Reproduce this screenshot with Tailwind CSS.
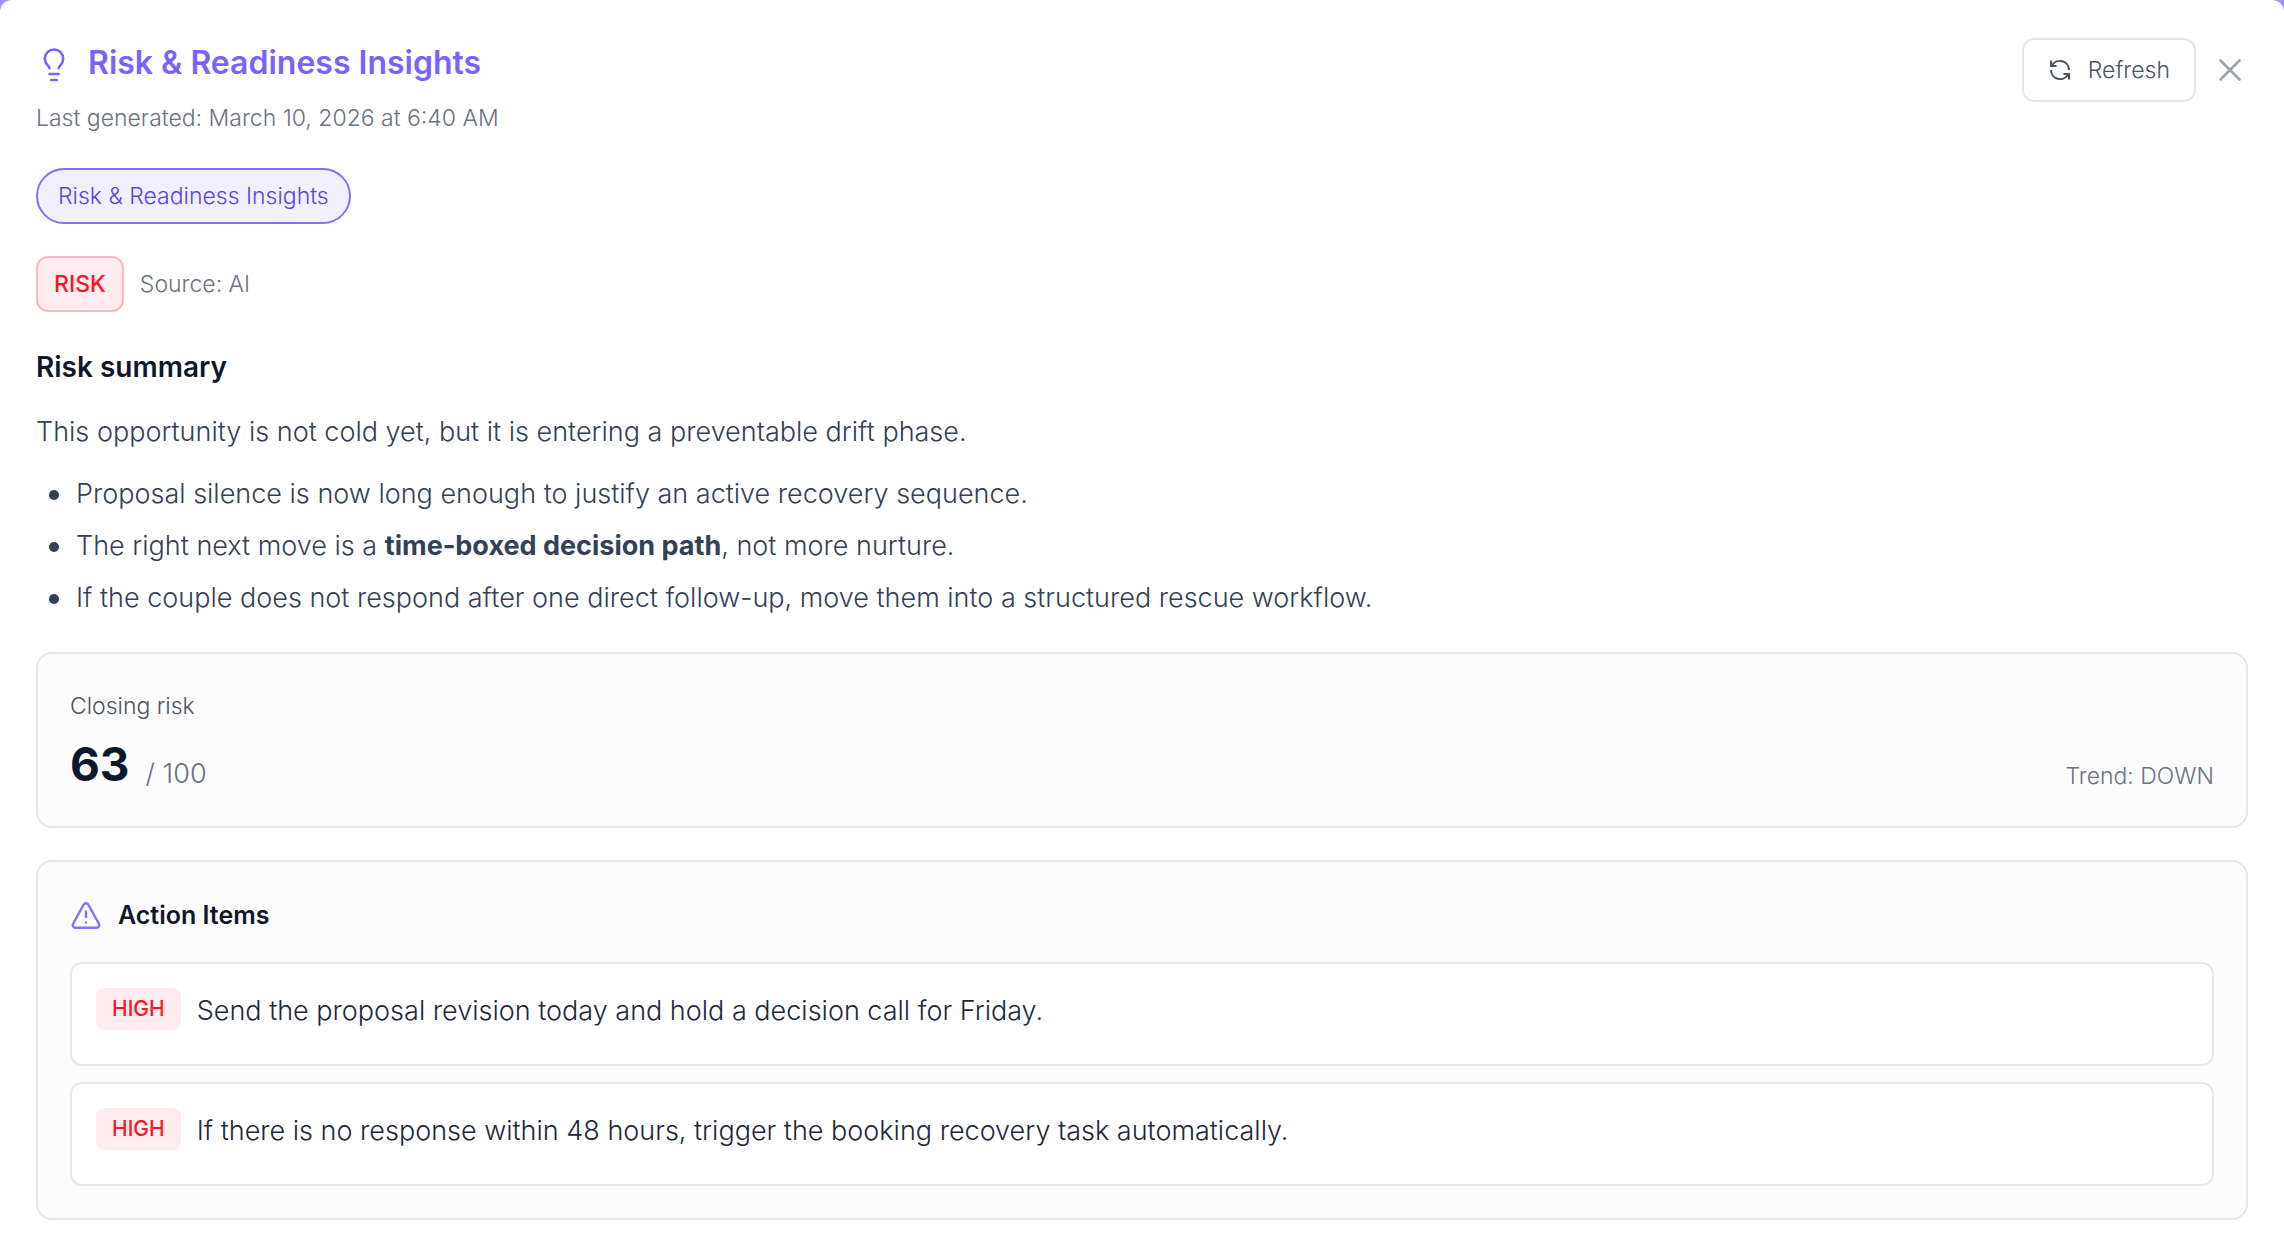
<!DOCTYPE html>
<html lang="en">
<head>
<meta charset="utf-8">
<meta name="viewport" content="width=device-width, initial-scale=1">
<title>Risk &amp; Readiness Insights</title>
<script src="https://cdn.jsdelivr.net/npm/@tailwindcss/browser@4"></script>
</head>
<body class="min-h-screen bg-[#a48ff8] font-['Inter',sans-serif] font-light">
<main class="flex min-h-screen flex-col gap-8 rounded-t-xl bg-white px-9 pt-[38px] pb-[30px]">
  <header class="flex items-start justify-between">
    <div class="flex flex-col gap-3">
      <h1 class="flex h-[50px] items-center gap-4 text-[32px] font-semibold text-[#7b61ff]">
        <svg class="size-9 overflow-visible" viewBox="0 0 24 24" fill="none" stroke="currentColor" stroke-width="1.7" stroke-linecap="round" stroke-linejoin="round" aria-hidden="true"><path d="M9 15.5C8.600 13.800 5.900 12.600 5.900 9.100a6.100 6.100 0 0 1 12.200 0C18.100 12.600 15.500 13.800 15.100 15.500M9 19.300h6M10.200 23.300h3.600"/></svg>
        Risk &amp; Readiness Insights
      </h1>
      <p class="text-[23px] leading-9 text-[#6b7280]">Last generated: March 10, 2026 at 6:40 AM</p>
    </div>
    <div class="flex items-center gap-4">
      <button type="button" class="flex h-16 items-center gap-4 rounded-xl border-2 border-[#e5e7eb] px-6 text-[23px] text-[#4b5563]">
        <svg class="size-6" viewBox="0 0 24 24" fill="none" stroke="currentColor" stroke-width="2" aria-hidden="true"><path d="M3 2.500V8h5.500M4 7.800A9 9 0 0 1 21 12M21 21.500V16h-5.500M20 16.200A9 9 0 0 1 3 12"/></svg>
        Refresh
      </button>
      <button type="button" aria-label="Close" class="text-[#9ca3af]">
        <svg class="size-9" viewBox="0 0 36 36" fill="none" stroke="currentColor" stroke-width="2.700" stroke-linecap="round" aria-hidden="true"><path d="M8.500 8.500l19 19M27.500 8.500l-19 19"/></svg>
      </button>
    </div>
  </header>

  <nav class="flex">
    <a href="#risk" class="flex h-14 items-center rounded-full border-2 border-[#8670fa] bg-[#f2f0ff] px-5 text-[23px] text-[#5b43e6]">Risk &amp; Readiness Insights</a>
  </nav>

  <div class="flex items-center gap-4 text-[23px]">
    <span class="flex h-14 items-center rounded-xl border-2 border-[#ffb8bb] bg-[#ffecee] px-4 font-medium text-[#fb1528]">RISK</span>
    <span class="text-[#6b7280]">Source: AI</span>
  </div>

  <section id="risk" class="flex flex-col text-[27px] leading-[44px] text-[#334155]">
    <h2 class="text-[28px] leading-[46px] font-semibold text-[#0f172a]">Risk summary</h2>
    <p class="mt-5">This opportunity is not cold yet, but it is entering a preventable drift phase.</p>
    <ul class="mt-[18px] flex flex-col gap-2">
      <li class="relative pl-10 before:absolute before:top-[18px] before:left-[13px] before:size-[10px] before:rounded-full before:bg-[#334155]">Proposal silence is now long enough to justify an active recovery sequence.</li>
      <li class="relative pl-10 before:absolute before:top-[18px] before:left-[13px] before:size-[10px] before:rounded-full before:bg-[#334155]">The right next move is a <strong class="font-bold">time-boxed decision path</strong>, not more nurture.</li>
      <li class="relative pl-10 before:absolute before:top-[18px] before:left-[13px] before:size-[10px] before:rounded-full before:bg-[#334155]">If the couple does not respond after one direct follow-up, move them into a structured rescue workflow.</li>
    </ul>
  </section>

  <section class="flex flex-col gap-2 rounded-2xl border-2 border-[#e5e7eb] bg-[#fcfcfd] p-8">
    <h3 class="text-[23px] leading-10 text-[#4b5563]">Closing risk</h3>
    <div class="flex items-end justify-between text-[#6b7280]">
      <p class="flex items-end gap-4 text-[27px] leading-10"><strong class="text-[46px] leading-[60px] font-bold text-[#0f172a]">63</strong> / 100</p>
      <p class="text-[23px] leading-9">Trend: DOWN</p>
    </div>
  </section>

  <section class="flex flex-col gap-6 rounded-2xl border-2 border-[#e5e7eb] bg-[#fcfcfd] p-8">
    <h3 class="flex h-11 items-center gap-4 text-[25px] font-semibold text-[#0f172a]">
      <svg class="size-8 text-[#8670ff]" viewBox="0 0 24 24" fill="none" stroke="currentColor" stroke-width="1.800" stroke-linecap="round" stroke-linejoin="round" aria-hidden="true"><path d="M10.300 3.400 2.300 17.800a2 2 0 0 0 1.700 3h16a2 2 0 0 0 1.700-3L13.700 3.400a2 2 0 0 0-3.400 0zM12 8.500v4.300M12 16.800h.010"/></svg>
      Action Items
    </h3>
    <ul class="flex flex-col gap-4">
      <li class="flex h-[104px] items-start gap-4 rounded-xl border-2 border-[#e5e7eb] bg-white p-6">
        <span class="flex h-[42px] items-center rounded-lg bg-[#ffecee] px-4 text-[21px] font-medium text-[#fb1528]">HIGH</span>
        <p class="text-[27px] leading-[46px] text-[#1e293b]">Send the proposal revision today and hold a decision call for Friday.</p>
      </li>
      <li class="flex h-[104px] items-start gap-4 rounded-xl border-2 border-[#e5e7eb] bg-white p-6">
        <span class="flex h-[42px] items-center rounded-lg bg-[#ffecee] px-4 text-[21px] font-medium text-[#fb1528]">HIGH</span>
        <p class="text-[27px] leading-[46px] text-[#1e293b]">If there is no response within 48 hours, trigger the booking recovery task automatically.</p>
      </li>
    </ul>
  </section>
</main>
</body>
</html>
